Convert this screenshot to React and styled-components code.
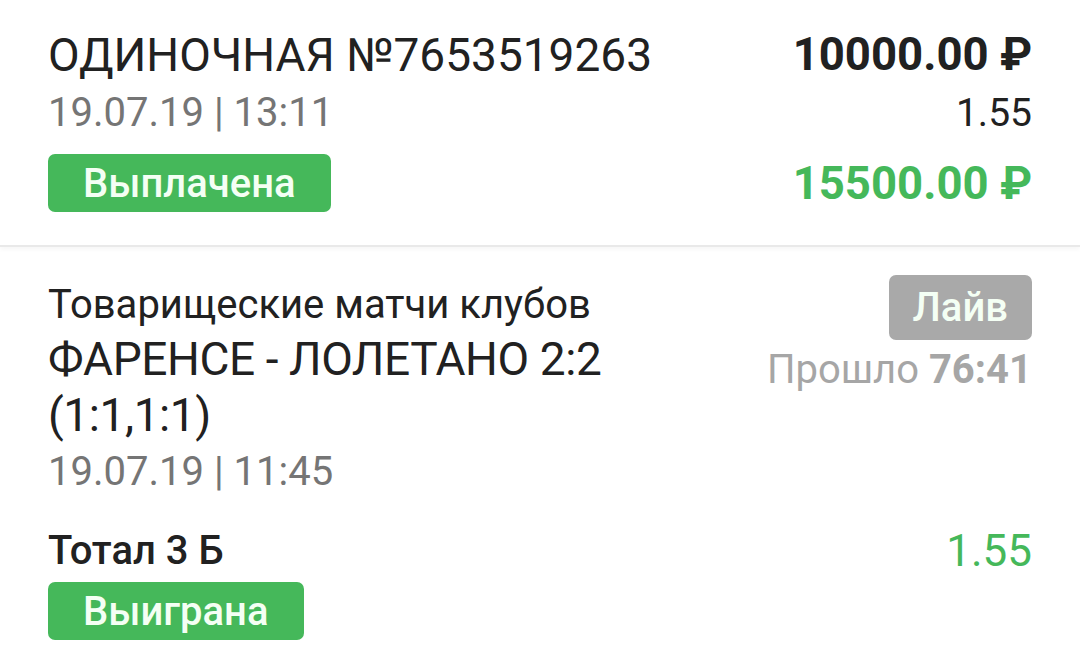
import React from 'react';
import styled, { createGlobalStyle } from 'styled-components';

const GlobalStyle = createGlobalStyle`
  * {
    box-sizing: border-box;
    margin: 0;
    padding: 0;
  }
  body {
    background: #fff;
    font-family: Roboto, 'Noto Sans', sans-serif;
    color: #212121;
  }
`;

const Page = styled.div`
  width: 1080px;
  height: 668px;
  overflow: hidden;
  background: #fff;
`;

const Section = styled.div`
  display: flex;
  justify-content: space-between;
  padding: ${(p) => p.pad};
  border-bottom: ${(p) => (p.divider ? '2px solid #e9e9e9' : 'none')};
  box-shadow: ${(p) => (p.divider ? '0 3px 4px rgba(0, 0, 0, 0.03)' : 'none')};
`;

const Column = styled.div`
  display: flex;
  flex-direction: column;
  align-items: ${(p) => (p.right ? 'flex-end' : 'flex-start')};
`;

const Title = styled.div`
  font-size: 46px;
  line-height: ${(p) => p.lh || 58}px;
  letter-spacing: ${(p) => p.ls || 0}px;
  color: #212121;
`;

const Sub = styled.div`
  margin-top: 3px;
  font-size: 40px;
  line-height: 53px;
  color: #212121;
`;

const Dim = styled.div`
  font-size: 40px;
  line-height: 58px;
  color: #757575;
`;

const Amount = styled.div`
  margin-top: ${(p) => p.mt || 0}px;
  font-size: ${(p) => p.size || 45.5}px;
  line-height: ${(p) => p.lh || 58}px;
  font-weight: ${(p) => p.weight || 400};
  color: ${(p) => (p.green ? '#45b85a' : '#212121')};
`;

const Badge = styled.div`
  display: inline-flex;
  align-items: center;
  justify-content: center;
  height: ${(p) => p.h || 58}px;
  padding: 0 ${(p) => p.px || 36}px;
  margin-top: ${(p) => p.mt || 0}px;
  border-radius: 7px;
  background: ${(p) => (p.gray ? '#a9a9a9' : '#45b85a')};
  color: #f4fff4;
  font-size: 40px;
  font-weight: 500;
`;

const Passed = styled.div`
  margin-top: 6px;
  font-size: 40px;
  line-height: 48px;
  color: #a6a6a6;

  b {
    font-weight: 700;
  }
`;

const Outcome = styled.div`
  display: flex;
  justify-content: space-between;
  align-items: flex-end;
  padding: 0 48px;
  margin-top: ${(p) => p.mt || 0}px;
`;

const OutcomeName = styled.div`
  font-size: 40px;
  line-height: 50px;
  font-weight: 500;
  color: #212121;
`;

export default function App() {
  return (
    <Page>
      <GlobalStyle />
      <Section divider pad="26px 48px 32px 48px">
        <Column>
          <Title>ОДИНОЧНАЯ №7653519263</Title>
          <Dim>19.07.19 | 13:11</Dim>
          <Badge mt={12} px={35}>Выплачена</Badge>
        </Column>
        <Column right>
          <Amount weight={700}>10000.00 ₽</Amount>
          <Amount size={39}>1.55</Amount>
          <Amount weight={700} green mt={13}>15500.00 ₽</Amount>
        </Column>
      </Section>
      <Section pad="28px 48px 0 48px">
        <Column>
          <Sub>Товарищеские матчи клубов</Sub>
          <Title lh={56} ls={-0.4}>
            ФАРЕНСЕ - ЛОЛЕТАНО 2:2
            <br />
            (1:1,1:1)
          </Title>
          <Dim>19.07.19 | 11:45</Dim>
        </Column>
        <Column right>
          <Badge gray h={65} px={24}>Лайв</Badge>
          <Passed>
            Прошло <b>76:41</b>
          </Passed>
        </Column>
      </Section>
      <Outcome mt={25}>
        <OutcomeName>Тотал 3 Б</OutcomeName>
        <Amount size={44} green lh={50}>1.55</Amount>
      </Outcome>
      <Outcome mt={6}>
        <Badge px={35}>Выиграна</Badge>
      </Outcome>
    </Page>
  );
}
